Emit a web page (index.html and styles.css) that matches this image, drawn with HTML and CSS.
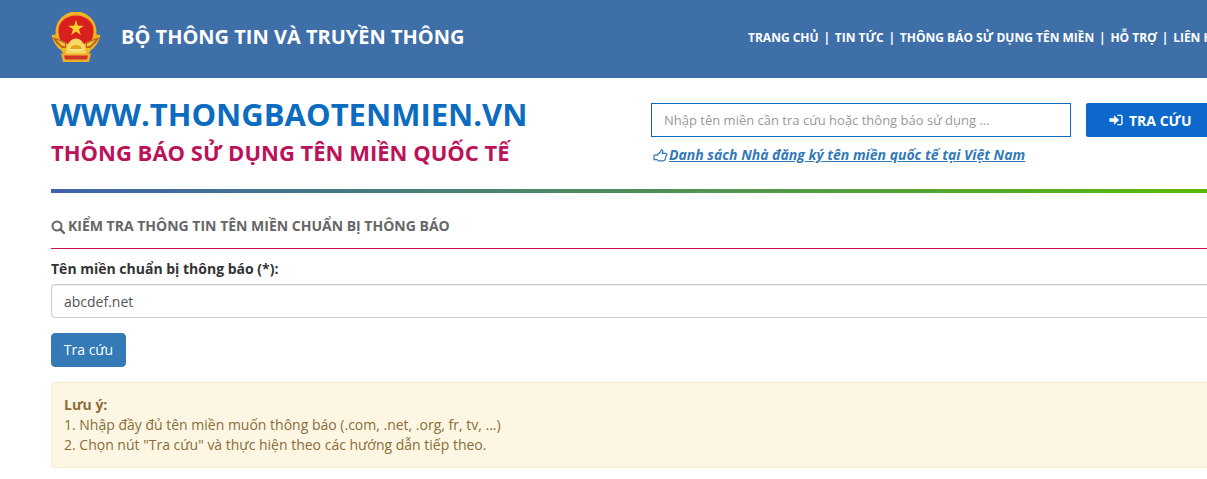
FILE: index.html
```html
<!DOCTYPE html>
<html lang="vi">
<head>
<meta charset="utf-8">
<title>Thông báo sử dụng tên miền quốc tế</title>
<link rel="stylesheet" href="styles.css">
</head>
<body>
<header class="topbar">
  <div class="brand">
    <svg class="emblem" viewBox="0 0 50 50" width="50" height="50" aria-hidden="true">
      <circle cx="25" cy="20" r="20.500" fill="#efb324"/>
      <path d="M0.500 23 C2 29 5 35 10 38 L14 44 L36 44 L40 38 C45 35 48 29 49.500 23 L42 22 L25 30 L8 22Z" fill="#efb324"/>
      <path d="M7.500 18 C7.500 10 15 3.500 25 3.500 C35 3.500 42.500 10 42.500 18 C42.500 22 42 25 41 27.500 L33 32 L17 32 L9 27.500 C8 25 7.500 22 7.500 18Z" fill="#d9201e"/>
      <polygon points="25,8 26.800,13.700 32.800,13.700 27.900,17.300 29.800,23 25,19.500 20.200,23 22.100,17.300 17.200,13.700 23.200,13.700" fill="#f6d32b"/>
      <path d="M1.500 25 L15 30 L15 36 L11 36 C7 33 3.500 29 1.500 25Z M48.500 25 L35 30 L35 36 L39 36 C43 33 46.500 29 48.500 25Z" fill="#b9621c"/>
      <path d="M5 27.500 L14 31.500 L14 34.500 L10.500 33.500Z M45 27.500 L36 31.500 L36 34.500 L39.500 33.500Z" fill="#f3c545"/>
      <path d="M15 42 C15 32 20 26.500 25 26.500 C30 26.500 35 32 35 42Z" fill="#f6d961"/>
      <path d="M19.500 37 C19.500 31.500 30.500 31.500 30.500 37Z" fill="#e6a31c"/>
      <path d="M18 37 H32 V39 H18Z" fill="#f9e58c"/>
      <polygon points="10,41.500 40,41.500 38,50 12,50" fill="#eeb02a"/>
      <polygon points="13,43.500 37,43.500 36,47.500 14,47.500" fill="#cf3526"/>
    </svg>
    <span class="ministry">BỘ THÔNG TIN VÀ TRUYỀN THÔNG</span>
  </div>
  <nav class="menu">
    <a href="#">TRANG CHỦ</a><i>|</i><a href="#">TIN TỨC</a><i>|</i><a href="#">THÔNG BÁO SỬ DỤNG TÊN MIỀN</a><i>|</i><a href="#">HỖ TRỢ</a><i>|</i><a href="#">LIÊN HỆ</a>
  </nav>
</header>
<main class="page">
  <section class="head">
    <div class="titles">
      <h1>WWW.THONGBAOTENMIEN.VN</h1>
      <h2>THÔNG BÁO SỬ DỤNG TÊN MIỀN QUỐC TẾ</h2>
    </div>
    <div class="searchbox">
      <div class="searchrow">
        <input class="q" type="text" placeholder="Nhập tên miền cần tra cứu hoặc thông báo sử dụng ...">
        <button class="go" type="button">
          <svg viewBox="0 0 16 16" width="15" height="14" aria-hidden="true"><path d="M0 6 H5 V2.500 L11 8 L5 13.500 V10 H0Z" fill="#fff"/><path d="M9 2 H13 Q15 2 15 4 V12 Q15 14 13 14 H9 V12.500 H12.500 Q13.500 12.500 13.500 11.500 V4.500 Q13.500 3.500 12.500 3.500 H9Z" fill="#fff"/></svg>
          TRA CỨU
        </button>
      </div>
      <a class="reg" href="#"><svg viewBox="0 0 16 14" width="15" height="13" aria-hidden="true"><path d="M1 6.500 L4.500 6.500 L8 3 L9 0.800 Q10.800 0.800 10.500 3 L9.800 4.800 L14 4.800 Q15.800 6 14 7.500 L13 11 Q12.500 12.800 11 12.800 L6 12.800 L4.500 11.500 L1 11.500Z" fill="none" stroke="#337ab7" stroke-width="1.300" stroke-linejoin="round"/></svg><span>Danh sách Nhà đăng ký tên miền quốc tế tại Việt Nam</span></a>
    </div>
  </section>
  <div class="rainbow"></div>
  <h3 class="section"><svg viewBox="0 0 14 14" width="14" height="14" aria-hidden="true"><circle cx="6" cy="6" r="4.500" fill="none" stroke="#666" stroke-width="2"/><path d="M9.200 9.200 L13 13" stroke="#666" stroke-width="2.400" stroke-linecap="round"/></svg>KIỂM TRA THÔNG TIN TÊN MIỀN CHUẨN BỊ THÔNG BÁO</h3>
  <form class="check">
    <label for="dom">Tên miền chuẩn bị thông báo (*):</label>
    <input id="dom" class="field" type="text" value="abcdef.net">
    <button class="submit" type="button">Tra cứu</button>
  </form>
  <div class="note">
    <strong>Lưu ý:</strong><br>
    1. Nhập đầy đủ tên miền muốn thông báo (.com, .net, .org, fr, tv, ...)<br>
    2. Chọn nút "Tra cứu" và thực hiện theo các hướng dẫn tiếp theo.
  </div>
</main>
</body>
</html>
```
FILE: styles.css
```css
* { box-sizing: border-box; }
html, body { margin: 0; padding: 0; height: 479px; overflow: hidden; background: #fff; }
body { width: 1207px; font-family: "Open Sans", sans-serif; font-size: 14px; line-height: 20px; color: #333; }

.topbar { height: 78px; width: 1300px; background: #3e6fa9; padding: 0 0 0 51px; display: flex; align-items: center; color: #fff; }
.brand { display: flex; align-items: center; width: 697px; flex: none; margin-top: -4px; }
.emblem { flex: none; }
.ministry { margin-left: 20px; font-size: 20px; font-weight: 700; line-height: 28px; white-space: nowrap; }
.menu { display: flex; align-items: center; white-space: nowrap; font-size: 12px; font-weight: 700; margin-top: -3px; }
.menu a { color: #fff; text-decoration: none; }
.menu i { font-style: normal; font-weight: 700; margin: 0 4.75px; }

.page { width: 1300px; padding-left: 51px; }
.head { display: flex; height: 111px; }
.titles { width: 600px; flex: none; }
h1 { margin: 16px 0 0; font-size: 31px; line-height: 40px; font-weight: 700; color: #0c6cbf; white-space: nowrap; }
h2 { margin: 3px 0 0; font-size: 22px; line-height: 30px; font-weight: 700; color: #bb1259; white-space: nowrap; }

.searchbox { padding-top: 25px; }
.searchrow { display: flex; }
.q { width: 420px; height: 34px; border: 1px solid #0c6cbf; padding: 0 12px; font: 13px "Open Sans", sans-serif; outline: 0; color: #555; }
.q::placeholder { color: #999; opacity: 1; }
.go { margin-left: 15px; width: 135px; height: 34px; border: 0; border-radius: 2px; background: #0c69cb; color: #fff; font: 700 14px "Open Sans", sans-serif; display: flex; align-items: center; justify-content: flex-start; gap: 5px; padding: 0 0 0 23px; }
.reg { display: flex; align-items: center; gap: 1px; margin-top: 7px; padding-left: 2px; color: #337ab7; font-size: 14px; font-style: italic; font-weight: 700; line-height: 22px; }
.reg span { text-decoration: underline; }

.rainbow { height: 4px; background: linear-gradient(90deg, #3e63ad, #5cb90a 1160px); }

.section { margin: 0; height: 56px; padding-top: 23px; display: flex; align-items: flex-start; gap: 3px; border-bottom: 1px solid #c8125f; font-size: 14px; line-height: 20px; font-weight: 700; color: #666; }
.section svg { margin-top: 4px; }
.check { padding-top: 10px; }
label { display: block; font-weight: 700; line-height: 20px; color: #333; margin-bottom: 5px; }
.field { display: block; width: 100%; height: 34px; border: 1px solid #ccc; border-radius: 4px; padding: 0 12px; font: 14px "Open Sans", sans-serif; color: #555; box-shadow: inset 0 1px 1px rgba(0,0,0,.075); }
.submit { display: block; margin-top: 15px; width: 75px; height: 34px; border: 1px solid #337ab7; border-radius: 4px; background: #337ab7; color: #fff; font: 14px "Open Sans", sans-serif; padding: 0 0 2px; }
.note { margin-top: 15px; height: 86px; padding: 12px; background-color: #fdf6e2; border: 1px solid #faebcc; border-radius: 4px; color: #8a6d3b; }
```
